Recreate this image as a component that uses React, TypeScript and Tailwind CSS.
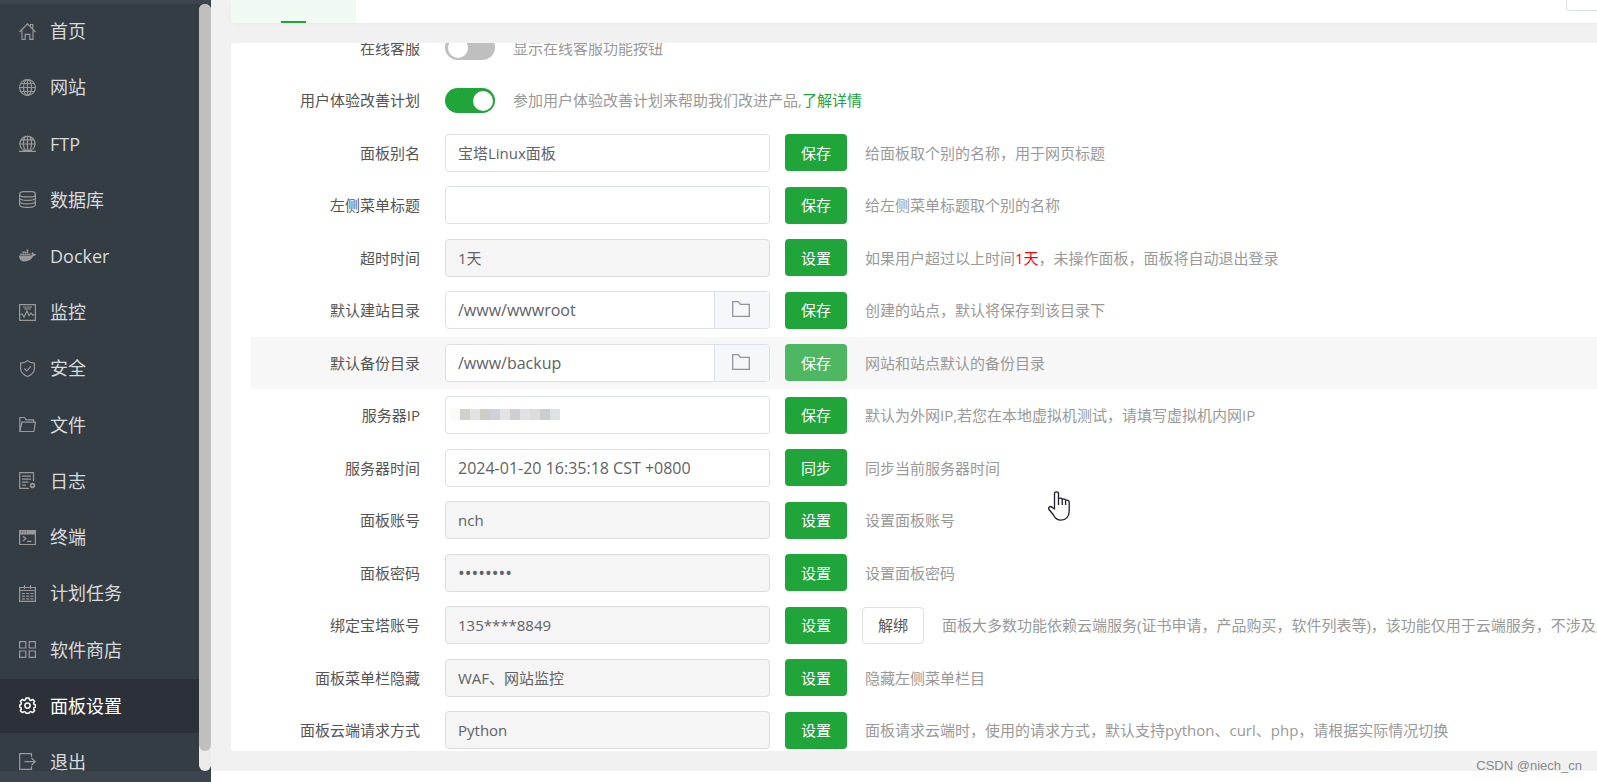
import type { ReactNode } from "react";
import { FaDocker } from "react-icons/fa";

type IconProps = { children: ReactNode };

function Icon({ children }: IconProps) {
  return (
    <svg
      viewBox="0 0 17 17"
      className="size-[17px]"
      fill="none"
      stroke="currentColor"
      strokeWidth="1.2"
      aria-hidden="true"
    >
      {children}
    </svg>
  );
}

const MENU: { text: string; icon: ReactNode; active?: boolean }[] = [
  {
    text: "首页",
    icon: (
      <Icon>
        <path d="M.5 9 8.5.8 16.5 9M3 7.5v8.9h3.2v-5h4.6v5H14V7.5M11.5 3V1.5h2.3v4" />
      </Icon>
    ),
  },
  {
    text: "网站",
    icon: (
      <Icon>
        <circle cx="8.5" cy="8.5" r="7.9" />
        <ellipse cx="8.5" cy="8.5" rx="4" ry="7.9" />
        <path d="M8.5.6v15.800M.6 8.5h15.800M1.700 4.500h13.600M1.700 12.500h13.600" />
      </Icon>
    ),
  },
  {
    text: "FTP",
    icon: (
      <Icon>
        <path d="M3.500 14.500a7.600 7.600 0 1 1 10 0M5.600 14.500C4 10 4.300 4.500 6.500.9M11.400 14.500C13 10 12.700 4.500 10.500.9M8.500.6v13.900M1 9h15M2 4.800h13" />
        <path d="M4 15.200h9M0 16.300h17" />
      </Icon>
    ),
  },
  {
    text: "数据库",
    icon: (
      <Icon>
        <path d="M.6 3.200C.6 1.200 3 .6 4.500.6h8c1.500 0 3.900.6 3.900 2.600s-2.400 2.600-3.900 2.600h-8C3 5.800.6 5.200.6 3.200z" />
        <path d="M.6 3.200v10.600c0 3.500 15.800 3.500 15.800 0V3.200M.6 6.700c0 3.500 15.800 3.500 15.800 0M.6 10.200c0 3.500 15.800 3.500 15.800 0" />
      </Icon>
    ),
  },
  { text: "Docker", icon: <FaDocker className="size-[17px]" aria-hidden="true" /> },
  {
    text: "监控",
    icon: (
      <Icon>
        <path d="M.6.6h15.800v15.800H.6zM4 3h9M5 5h7M1.500 10.500l1.500-.5 2 3 3-6 2 4.500 2-2.500 1.500 2 2-.5" />
      </Icon>
    ),
  },
  {
    text: "安全",
    icon: (
      <Icon>
        <path d="M8.500.6C6.500 2.300 4 3 1.600 3.100v5.400c0 4 3 6.500 6.900 8 3.900-1.500 6.900-4 6.900-8V3.100C13 3 10.500 2.300 8.500.6z" />
        <path d="m5.200 8.300 2.500 2.500 4.200-4.500" />
      </Icon>
    ),
  },
  {
    text: "文件",
    icon: (
      <Icon>
        <path d="M.8 15.500V1.500h4.700l1.700 2.300h7.500v2.400M.8 15.500 3 6.200h13.400l-1.500 9.300z" />
      </Icon>
    ),
  },
  {
    text: "日志",
    icon: (
      <Icon>
        <path d="M14.500 9V.7H.7v15.600H10M3 4.200h9M3 7.200h9M3 10.200h6.500M3 13.200h4" />
        <circle cx="13.500" cy="13.500" r="1.900" strokeWidth="1.600" />
      </Icon>
    ),
  },
  {
    text: "终端",
    icon: (
      <Icon>
        <path d="M.6 1.500h15.800v14H.6z" />
        <path d="M.6 1.500h15.800v3.500H.6z" fill="currentColor" />
        <path d="M2 3h1M4.500 3h1M7 3h1" stroke="#353d44" />
        <path d="m4 7.300 2.800 2.300L4 12M8 12.300h4.500" />
      </Icon>
    ),
  },
  {
    text: "计划任务",
    icon: (
      <Icon>
        <path d="M.6 2.500h15.800v13.900H.6zM.6 5.500h15.800M5.500 0v4M11.500 0v4" />
        <path d="M3 8.500h11.500M3 11.200h11.500M3 13.900h11.500" strokeDasharray="3 1.200" />
      </Icon>
    ),
  },
  {
    text: "软件商店",
    icon: (
      <Icon>
        <path d="M.6.7h6.200V7H.6zM10.200.7h6.200V7h-6.200zM.6 10h6.200v6.300H.6zM10.200 10h6.200v6.300h-6.200z" />
      </Icon>
    ),
  },
  {
    text: "面板设置",
    active: true,
    icon: (
      <Icon>
        <path
          strokeWidth="1.500"
          strokeLinejoin="round"
          d="M7 .9h3l.5 2 1.300.6 1.800-1.100 2 2-1 1.800.5 1.300 1.500.5v2l-1.500.6-.5 1.300 1 1.700-2 2-1.800-1-1.300.5-.5 1.200H7l-.5-1.200-1.300-.5-1.800 1-2-2 1-1.700-.5-1.300-1.100-.6V8l1.100-.5.5-1.300-1-1.800 2-2 1.800 1.100 1.300-.6z"
        />
        <circle cx="8.500" cy="8.600" r="2.600" strokeWidth="1.500" />
      </Icon>
    ),
  },
  {
    text: "退出",
    icon: (
      <Icon>
        <path d="M12.500 4V.7H.7v15.700h11.800v-3.200M5.500 8.600h10.500M12.500 5l3.700 3.600-3.700 3.600" />
      </Icon>
    ),
  },
];

type Row = {
  id: string;
  label: string;
  kind: "switch" | "text" | "time" | "path" | "masked" | "password";
  value?: string;
  on?: boolean;
  locked?: boolean;
  action?: string;
  extra?: string;
  hover?: boolean;
  hint: ReactNode;
};

const ROWS: Row[] = [
  { id: "service", label: "在线客服", kind: "switch", hint: "显示在线客服功能按钮" },
  {
    id: "improve",
    label: "用户体验改善计划",
    kind: "switch",
    on: true,
    hint: (
      <>
        参加用户体验改善计划来帮助我们改进产品,
        <a href="#improve" className="text-[#20a53a]">
          了解详情
        </a>
      </>
    ),
  },
  { id: "alias", label: "面板别名", kind: "text", value: "宝塔Linux面板", action: "保存", hint: "给面板取个别的名称，用于网页标题" },
  { id: "menu-title", label: "左侧菜单标题", kind: "text", value: "", action: "保存", hint: "给左侧菜单标题取个别的名称" },
  {
    id: "timeout",
    label: "超时时间",
    kind: "text",
    value: "1天",
    locked: true,
    action: "设置",
    hint: (
      <>
        如果用户超过以上时间<span className="text-[#f00]">1天</span>，未操作面板，面板将自动退出登录
      </>
    ),
  },
  { id: "site-dir", label: "默认建站目录", kind: "path", value: "/www/wwwroot", action: "保存", hint: "创建的站点，默认将保存到该目录下" },
  { id: "backup-dir", label: "默认备份目录", kind: "path", value: "/www/backup", action: "保存", hover: true, hint: "网站和站点默认的备份目录" },
  { id: "server-ip", label: "服务器IP", kind: "masked", value: "", action: "保存", hint: "默认为外网IP,若您在本地虚拟机测试，请填写虚拟机内网IP" },
  { id: "server-time", label: "服务器时间", kind: "time", value: "2024-01-20 16:35:18 CST +0800", action: "同步", hint: "同步当前服务器时间" },
  { id: "account", label: "面板账号", kind: "text", value: "nch", locked: true, action: "设置", hint: "设置面板账号" },
  { id: "password", label: "面板密码", kind: "password", value: "12345678", locked: true, action: "设置", hint: "设置面板密码" },
  {
    id: "bind",
    label: "绑定宝塔账号",
    kind: "text",
    value: "135****8849",
    locked: true,
    action: "设置",
    extra: "解绑",
    hint: "面板大多数功能依赖云端服务(证书申请，产品购买，软件列表等)，该功能仅用于云端服务，不涉及用户隐私",
  },
  { id: "hide-menu", label: "面板菜单栏隐藏", kind: "text", value: "WAF、网站监控", locked: true, action: "设置", hint: "隐藏左侧菜单栏目" },
  {
    id: "request",
    label: "面板云端请求方式",
    kind: "text",
    value: "Python",
    locked: true,
    action: "设置",
    hint: "面板请求云端时，使用的请求方式，默认支持python、curl、php，请根据实际情况切换",
  },
];

const FIELD_TEXT = {
  switch: "",
  text: "text-[15px]",
  time: "text-[16px]",
  path: "text-[16px]",
  masked: "text-[15px]",
  password: "text-[18px]",
};

const MASK = ["#fafaf8", "#cfcfcc", "#e0e2e4", "#cfccc6", "#cdd1d9", "#e3e3e3", "#cfcfcf", "#dfe1e4", "#dcddda", "#cdcdcd", "#dfe1e4"];

function Field({ row }: { row: Row }) {
  if (row.kind === "switch") {
    return (
      <input
        id={row.id}
        type="checkbox"
        role="switch"
        defaultChecked={row.on}
        className="h-[25px] w-[50px] shrink-0 appearance-none rounded-full bg-[#bfbfbf] p-[3px] before:block before:size-[20px] before:rounded-full before:bg-white checked:bg-[#20a53a] checked:before:ml-[25px]"
      />
    );
  }

  return (
    <div
      className={`relative flex h-[38px] w-[325px] shrink-0 overflow-hidden rounded-[4px] border ${
        row.locked ? "border-[#dcdcdc] bg-[#f5f5f5]" : "border-[#dcdfe6] bg-white"
      }`}
    >
      <input
        id={row.id}
        type={row.kind === "password" ? "password" : "text"}
        defaultValue={row.value}
        readOnly={row.locked}
        className={`min-w-0 flex-1 bg-transparent px-3 text-[#606266] outline-none ${FIELD_TEXT[row.kind]}`}
      />
      {row.kind === "path" && (
        <button
          type="button"
          aria-label="选择目录"
          className="flex w-[55px] items-center justify-center border-l border-[#dcdfe6] bg-[#f5f7fa] pr-0.5 pb-0.5 text-[#909399]"
        >
          <svg viewBox="0 0 18 16" className="h-4 w-[18px]" fill="none" stroke="currentColor" strokeWidth="1.3" aria-hidden="true">
            <path d="M.7.7h5.600l2.200 2.600h8.800v12H.7z" />
          </svg>
        </button>
      )}
      {row.kind === "masked" && (
        <span className="absolute top-3 left-1 flex" aria-hidden="true">
          {MASK.map((color, i) => (
            <span key={i} className="h-[11px] w-[10px]" style={{ backgroundColor: color }} />
          ))}
        </span>
      )}
    </div>
  );
}

function SettingRow({ row }: { row: Row }) {
  return (
    <div className="flex flex-1 pb-px">
      <div className={`flex flex-1 items-center whitespace-nowrap ${row.hover ? "bg-[#f7f7f7]" : ""}`}>
        <label htmlFor={row.id} className="mr-[25px] w-[169px] shrink-0 text-right text-[#555]">
          {row.label}
        </label>
        <Field row={row} />
        {row.action && (
          <button
            type="button"
            className={`ml-[15px] h-[37px] w-[62px] shrink-0 rounded-[4px] text-white ${
              row.hover ? "bg-[#4db761]" : "bg-[#20a53a]"
            }`}
          >
            {row.action}
          </button>
        )}
        {row.extra && (
          <button
            type="button"
            className="ml-[15px] h-[37px] w-[62px] shrink-0 rounded-[4px] border border-[#dcdfe6] bg-white text-[#555]"
          >
            {row.extra}
          </button>
        )}
        <span className="ml-[18px] text-[#999]">{row.hint}</span>
      </div>
    </div>
  );
}

function Sidebar() {
  return (
    <aside className="w-[211px] shrink-0 bg-[#3c444d] pt-1 pb-[11px]">
      <div className="flex h-full overflow-hidden bg-[#353d44]">
        <nav className="flex-1">
          <ul className="flex h-[787px] flex-col">
            {MENU.map((item) => (
              <li key={item.text} className="flex flex-1 pb-0.5">
                <a
                  href="#menu"
                  className={`flex flex-1 items-center gap-[14px] pl-[19px] text-[18px] ${
                    item.active ? "bg-[#2c3038] text-white" : "text-[#d8dadb]"
                  }`}
                >
                  <span className={item.active ? "text-white" : "text-[#999]"}>{item.icon}</span>
                  {item.text}
                </a>
              </li>
            ))}
          </ul>
        </nav>
        <div className="w-3 rounded-full bg-[#ebebeb] pb-5" aria-hidden="true">
          <div className="h-full rounded-full bg-[#bfbfbf]" />
        </div>
      </div>
    </aside>
  );
}

export default function App() {
  return (
    <div className="relative flex h-screen overflow-hidden bg-white font-['Open_Sans','Noto_Sans_CJK_SC',sans-serif] text-[15px] leading-5">
      <Sidebar />

      <main className="min-w-0 flex-1 pb-[11px]">
        <div className="flex h-full flex-col bg-[#f1f1f1] pb-5 pl-5">
          {/* Tab bar, scrolled mostly out of view */}
          <header className="flex h-[23px] shrink-0 justify-between rounded-bl-[4px] bg-white shadow-[0_1px_4px_rgba(0,0,0,0.04)]">
            <div className="flex w-[125px] items-end justify-center rounded-bl-[4px] bg-[#f0f9f2]">
              <span className="h-[2px] w-[25px] bg-[#20a53a]" />
            </div>
            <div className="h-[11px] w-[31px] rounded-bl-[4px] border-b border-l border-[#dcdfe6]" />
          </header>

          <section className="mt-5 min-h-0 flex-1 overflow-hidden rounded-l-[4px] bg-white pl-5">
            <form className="-mt-[21px] flex h-[735px] flex-col">
              {ROWS.map((row) => (
                <SettingRow key={row.id} row={row} />
              ))}
            </form>
          </section>
        </div>
      </main>

      <p className="absolute right-[15px] bottom-[6px] font-['Liberation_Sans',sans-serif] text-[13px] text-[#888]">
        CSDN @niech_cn
      </p>

      {/* Mouse pointer */}
      <svg
        viewBox="0 0 22 30"
        className="absolute top-[491px] left-[1048px] h-[30px] w-[22px]"
        fill="#fff"
        stroke="#1c1c2c"
        strokeWidth="1.3"
        strokeLinejoin="round"
        aria-hidden="true"
      >
        <path d="M6.500 18V2.500c0-2.300 4-2.300 4 0V7.500c1.500-.8 3.300-.3 3.700.8 1.500-.7 3-.2 3.400.9 1.800-.5 3.600.2 3.600 2V20c0 5.500-3.200 9.200-8.200 9.200-4 0-6-2-7.500-5.200L1 18.500c-1.200-2.500 1.800-4 3.300-2z" />
        <path d="M10.500 7.500V14M14.200 8.500V14M17.600 9.500V14" fill="none" />
      </svg>
    </div>
  );
}
